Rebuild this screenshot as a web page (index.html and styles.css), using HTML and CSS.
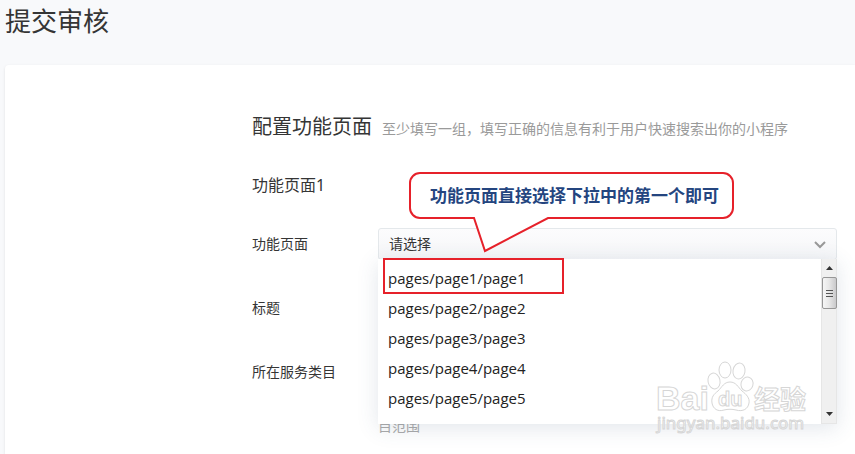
FILE: index.html
```html
<!DOCTYPE html>
<html lang="zh-CN">
<head>
<meta charset="utf-8">
<title>提交审核</title>
<link rel="stylesheet" href="styles.css">
</head>
<body>
<h1 class="page-title">提交审核</h1>
<main class="card">
  <header class="section-head">
    <h2 class="section-title">配置功能页面</h2>
    <p class="section-note">至少填写一组，填写正确的信息有利于用户快速搜索出你的小程序</p>
  </header>
  <h3 class="group-title">功能页面1</h3>
  <form class="form">
    <div class="row">
      <label class="label" for="page">功能页面</label>
      <div class="picker">
        <select class="select" id="page"><option>请选择</option></select>
        <svg class="chevron" viewBox="0 0 10 6" aria-hidden="true"><path d="M0 0l5 5 5-5"/></svg>
        <div class="menu">
          <ul class="options" role="listbox" aria-label="功能页面">
            <li class="option" role="option">pages/page1/page1</li>
            <li class="option" role="option">pages/page2/page2</li>
            <li class="option" role="option">pages/page3/page3</li>
            <li class="option" role="option">pages/page4/page4</li>
            <li class="option" role="option">pages/page5/page5</li>
            <li class="option" role="option">pages/page6/page6</li>
          </ul>
          <div class="scrollbar" aria-hidden="true">
            <svg class="arrow" viewBox="0 0 7 4"><path d="M0 4L3.500 0 7 4z"/></svg>
            <div class="thumb"><i></i><i></i><i></i></div>
            <svg class="arrow arrow-down" viewBox="0 0 7 4"><path d="M0 0h7L3.500 4z"/></svg>
          </div>
        </div>
        <svg class="callout" viewBox="0 0 332 126" aria-hidden="true">
          <path class="bubble" d="M16 3H319a10 10 0 0 1 10 10V38a10 10 0 0 1-10 10H144L81 81 70 48H16a10 10 0 0 1-10-10V13a10 10 0 0 1 10-10z"/>
        </svg>
        <p class="callout-text">功能页面直接选择下拉中的第一个即可</p>
        <div class="highlight"></div>
      </div>
    </div>
    <div class="row">
      <span class="label">标题</span>
    </div>
    <div class="row">
      <span class="label">所在服务类目</span>
      <p class="hint">目范围</p>
    </div>
  </form>
</main>
<svg class="watermark" viewBox="0 0 160 80" aria-hidden="true">
  <g class="mark">
    <text class="logo" x="3" y="48">Bai</text>
    <ellipse cx="61" cy="19" rx="6" ry="8" transform="rotate(-12 61 19)"/>
    <ellipse cx="72" cy="8" rx="6" ry="8"/>
    <ellipse cx="86" cy="9" rx="6" ry="8" transform="rotate(10 86 9)"/>
    <ellipse cx="94" cy="22" rx="6" ry="7" transform="rotate(15 94 22)"/>
    <path d="M77 20c-6 0-8 5-12 9-4 3-7 6-6 12 1 6 6 9 12 7 4-1 8-1 12 0 7 2 12-1 13-7 1-5-3-9-7-12-4-4-6-9-12-9z"/>
    <text class="logo-small" x="65" y="44">du</text>
    <text class="logo-cn" x="101" y="47">经验</text>
    <text class="site" x="4" y="67">jingyan.baidu.com</text>
  </g>
</svg>
</body>
</html>
```

FILE: styles.css
```css
* { box-sizing: border-box; }

body {
  margin: 0;
  min-height: 100vh;
  display: flex;
  flex-direction: column;
  overflow: hidden;
  position: relative;
  background: #f8f9fb;
  color: #353535;
  font: 14px/20px "Noto Sans", "Noto Sans CJK SC", sans-serif;
}

h1, h2, h3, p, ul { margin: 0; padding: 0; font-weight: 400; }

.page-title {
  padding: 1px 5px 0;
  font-size: 26px;
  line-height: 40px;
}

.card {
  flex: 1;
  margin: 24px 0 0 5px;
  padding: 48px 18px 0 247px;
  background: #fff;
  border-radius: 4px 0 0 0;
  box-shadow: 0 1px 3px rgba(0, 0, 0, .1);
}

.section-head {
  display: flex;
  align-items: baseline;
  gap: 10px;
  white-space: nowrap;
}

.section-title { font-size: 20px; line-height: 28px; }
.section-note { color: #9a9a9a; }

.group-title {
  margin-top: 32px;
  font-size: 16px;
  line-height: 24px;
}

.form {
  margin-top: 31px;
  display: grid;
  row-gap: 32px;
}

.row {
  display: grid;
  grid-template-columns: 126px 1fr;
  min-height: 32px;
}

.label { line-height: 32px; }

.picker { position: relative; }

.select {
  display: block;
  width: 100%;
  height: 32px;
  padding: 0 10px;
  appearance: none;
  border: 1px solid #e4e8eb;
  border-radius: 3px;
  background: linear-gradient(#fcfcfd, #f5f6f8);
  color: #353535;
  font: inherit;
}

.chevron {
  position: absolute;
  top: 14px;
  right: 12px;
  width: 10px;
  height: 6px;
  overflow: visible;
  fill: none;
  stroke: #999;
  stroke-width: 2;
}

.menu {
  position: absolute;
  top: 31px;
  left: 0;
  right: 0;
  height: 165px;
  display: flex;
  background: #fff;
  box-shadow: 0 4px 20px rgba(60, 85, 120, .15);
}

.options {
  flex: 1;
  padding-top: 4px;
  overflow: hidden;
  list-style: none;
}

.option {
  padding: 0 10px;
  color: #222;
  font-family: "Open Sans", sans-serif;
  font-size: 15px;
  line-height: 30px;
}

.scrollbar {
  width: 16px;
  display: flex;
  flex-direction: column;
  align-items: center;
  padding: 7px 0;
  border: 1px solid #e6e6e6;
  border-width: 0 1px 1px;
  background: #f0f0f0;
}

.arrow { width: 7px; height: 4px; fill: #333; }
.arrow-down { margin-top: auto; }

.thumb {
  width: 15px;
  height: 32px;
  margin-top: 7px;
  display: flex;
  flex-direction: column;
  align-items: center;
  justify-content: center;
  gap: 2px;
  border: 1px solid #979797;
  border-radius: 2px;
  background: linear-gradient(90deg, #f6f6f6, #e8e8e8 45%, #c9c9cb);
}

.thumb i { width: 7px; height: 1px; background: #555; }

.callout {
  position: absolute;
  left: 26px;
  top: -58px;
  width: 332px;
  height: 126px;
  pointer-events: none;
}

.bubble { fill: #fff; stroke: #e6212a; stroke-width: 2; }

.callout-text {
  position: absolute;
  left: 52px;
  top: -44px;
  color: #24457f;
  font-size: 17px;
  font-weight: 700;
  line-height: 24px;
  white-space: nowrap;
}

.highlight {
  position: absolute;
  left: 5px;
  top: 30px;
  width: 181px;
  height: 36px;
  border: 2px solid #e6212a;
}

.hint {
  padding-top: 60px;
  color: #aaa;
}

.watermark {
  position: absolute;
  right: 42px;
  bottom: 12px;
  width: 160px;
  height: 80px;
  pointer-events: none;
  overflow: visible;
}

.mark {
  fill: #fff;
  stroke: #d6d6d6;
  stroke-width: 1;
  font-family: "Liberation Sans", "Noto Sans CJK SC", sans-serif;
  font-weight: 700;
}

.logo { font-size: 34px; }
.logo-small { font-size: 20px; }
.logo-cn { font-size: 26px; }
.site { font-family: "Noto Sans", sans-serif; font-size: 17px; font-weight: 400; }
```
